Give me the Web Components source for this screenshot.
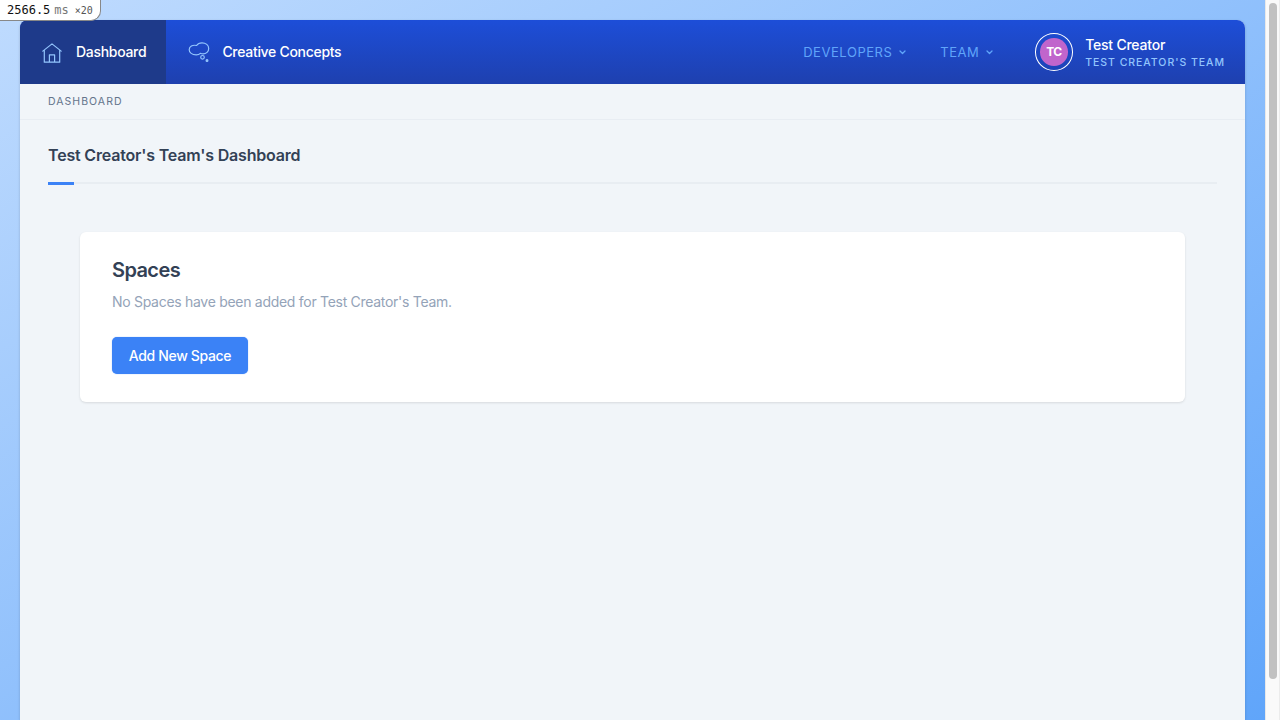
<!DOCTYPE html>
<html lang="en">
<head>
<meta charset="utf-8">
<title>Dashboard</title>
<style>
html, body { margin: 0; height: 100%; overflow: hidden; }
body { font-family: Inter, "Liberation Sans", sans-serif; font-size: 14px; line-height: 20px; }
</style>
</head>
<body>
<app-shell>
  <nav-link slot="nav" label="Dashboard" icon="home" active></nav-link>
  <nav-link slot="nav" label="Creative Concepts" icon="thought"></nav-link>
  <nav-menu slot="menus" style="width:137px">Developers</nav-menu>
  <nav-menu slot="menus" style="width:94.5px">Team</nav-menu>
  <user-badge slot="menus" initials="TC" name="Test Creator" team="Test Creator's Team"></user-badge>
  <bread-crumb>Dashboard</bread-crumb>
  <page-title>Test Creator's Team's Dashboard</page-title>
  <content-card>
    <span slot="title">Spaces</span>
    <span slot="text">No Spaces have been added for Test Creator's Team.</span>
    <action-button slot="actions">Add New Space</action-button>
  </content-card>
</app-shell>
<perf-badge time="2566.5" unit="ms" count="×20"></perf-badge>
<script>
const define = (name, render) => customElements.define(name, class extends HTMLElement {
  constructor() {
    super();
    this.attachShadow({ mode: "open" });
  }
  connectedCallback() {
    this.shadowRoot.innerHTML = render(this);
  }
});

const icons = {
  home: `<svg width="20" height="20" viewBox="0 0 20 20"><path d="M.8 8.1 10 .9l9.2 7.2M2.3 7v12.2h15.4V7M7.4 19.2v-7.4h5.2v7.4"/></svg>`,
  thought: `<svg width="22" height="22" viewBox="0 0 22 22"><path d="M8.600 3.500C9.700 1.700 11.600.8 14 .8c3.800 0 6.700 2.400 6.700 5.600 0 3.200-2.500 5.500-5.600 5.500-1.100 0-1.900-.2-2.700-.6-1 1-2.300 1.500-4.200 1.500C4 12.800 1.200 10.700 1.200 7.700c0-3.100 3.300-5.200 7.400-4.200z"/><circle cx="14.500" cy="15.300" r="1.800"/><circle cx="19" cy="18.500" r=".9" fill="#93c5fd"/></svg>`
};

define("app-shell", () => `
<style>
:host { display: flex; height: 100vh; background: #fafafa; }
.page { flex: 1; min-width: 0; box-sizing: border-box; padding: 20px 20px 0; display: flex; background: linear-gradient(to bottom right, #bfdbfe, #60a5fa); }
.window { flex: 1; min-width: 0; background: #f1f5f9; border-radius: 8px 8px 0 0; box-shadow: 0 1px 3px rgba(0,0,0,.18); }
header { display: flex; height: 64px; border-radius: 8px 8px 0 0; overflow: hidden; background: linear-gradient(#1d4ed8, #1e40af); }
.menus { display: flex; margin-left: auto; }
aside { box-sizing: border-box; width: 15px; border-left: 1px solid #e8e8e8; border-right: 1px solid #ececec; padding: 3px 2px 0 3px; }
.thumb { width: 8px; height: 676px; border-radius: 4px; background: #c1c1c1; }
</style>
<div class="page"><div class="window">
<header><slot name="nav"></slot><div class="menus"><slot name="menus"></slot></div></header>
<slot></slot>
</div></div>
<aside><div class="thumb"></div></aside>`);

define("nav-link", el => `
<style>
:host { display: flex; align-items: center; box-sizing: border-box; padding: 0 20px 0 22px; color: #fff; font-weight: 500; letter-spacing: -.3px; white-space: nowrap; }
:host([active]) { width: 146.400px; padding: 0 0 0 22px; background: #1e3a8a; }
.icon { display: flex; flex: none; width: 34px; padding-top: 1px; }
svg { fill: none; stroke: #93c5fd; stroke-width: 1.200; stroke-linejoin: round; stroke-linecap: round; }
</style>
<span class="icon">${icons[el.getAttribute("icon")]}</span><span>${el.getAttribute("label")}</span>`);

define("nav-menu", () => `
<style>
:host { display: flex; align-items: center; color: #60a5fa; font-size: 13px; letter-spacing: .55px; text-transform: uppercase; white-space: nowrap; }
svg { margin-left: 6.500px; fill: none; stroke: #60a5fa; stroke-width: 1.300; stroke-linecap: round; stroke-linejoin: round; }
</style>
<slot></slot><svg width="7" height="5" viewBox="0 0 7 5"><path d="m1 1 2.500 2.500L6 1"/></svg>`);

define("user-badge", el => `
<style>
:host { display: flex; align-items: center; padding-right: 20px; color: #fff; white-space: nowrap; }
.ring { box-sizing: border-box; width: 38.500px; height: 38px; padding: 4px; border: 1px solid #fff; border-radius: 50%; margin-right: 12px; }
.face { height: 28px; border-radius: 50%; background: #c065cc; text-align: center; font-size: 12px; line-height: 28px; font-weight: 700; letter-spacing: -.5px; }
.name { font-weight: 500; line-height: 20px; letter-spacing: -.22px; }
.team { font-size: 10.500px; line-height: 14px; padding-top: 1px; margin-bottom: -1px; letter-spacing: .965px; font-weight: 450; color: #93c5fd; text-transform: uppercase; }
</style>
<div class="ring"><div class="face">${el.getAttribute("initials")}</div></div>
<div><div class="name">${el.getAttribute("name")}</div><div class="team">${el.getAttribute("team")}</div></div>`);

define("bread-crumb", () => `
<style>
:host { display: block; box-sizing: border-box; height: 36px; padding: 0 28px; border-bottom: 1px solid #e8edf3; font-size: 10.500px; line-height: 35px; letter-spacing: 1.050px; color: #64748b; text-transform: uppercase; }
</style><slot></slot>`);

define("page-title", () => `
<style>
:host { display: block; padding: 23px 28px 0; color: #334155; font-size: 16px; line-height: 24px; font-weight: 600; letter-spacing: -.18px; }
.rule { height: 2px; margin-top: 15px; background: #e8edf2; }
.mark { position: relative; top: -.5px; width: 26px; height: 3px; background: #3b82f6; }
</style><slot></slot><div class="rule"><div class="mark"></div></div>`);

define("content-card", () => `
<style>
:host { display: block; box-sizing: border-box; margin: 48px 60px 0; height: 170px; padding: 24px 32px; border-radius: 6px; background: #fff; box-shadow: 0 1px 3px rgba(0,0,0,.08), 0 1px 2px rgba(0,0,0,.04); }
.title { font-size: 20px; line-height: 28px; font-weight: 600; letter-spacing: -.6px; color: #334155; }
.text { margin: 8px 0 25px; color: #94a3b8; line-height: 20px; letter-spacing: -.29px; }
.actions { display: flex; }
</style>
<div class="title"><slot name="title"></slot></div>
<div class="text"><slot name="text"></slot></div>
<div class="actions"><slot name="actions"></slot></div>`);

define("action-button", () => `
<style>
:host { display: block; }
button { display: block; width: 136px; height: 37px; margin: 0; padding: 0; border: 0; border-radius: 5px; background: #3b82f6; color: #fff; font: inherit; font-weight: 500; letter-spacing: -.35px; box-shadow: 0 0 1px rgba(59,130,246,.7); }
</style><button><slot></slot></button>`);

define("perf-badge", el => `
<style>
:host { position: absolute; top: 0; left: 0; box-sizing: border-box; width: 101px; height: 21px; padding-left: 7px; background: #fff; border: solid #888; border-width: 0 1px 1px 0; border-radius: 0 0 10px 0; font: 12px/20px "DejaVu Sans Mono", monospace; color: #111; white-space: pre; display: flex; }
.unit { margin-left: 4px; color: #777; }
.count { margin-left: 6px; font-size: 10px; color: #555; line-height: 21px; }
</style><span>${el.getAttribute("time")}</span><span class="unit">${el.getAttribute("unit")}</span><span class="count">${el.getAttribute("count")}</span>`);
</script>
</body>
</html>
